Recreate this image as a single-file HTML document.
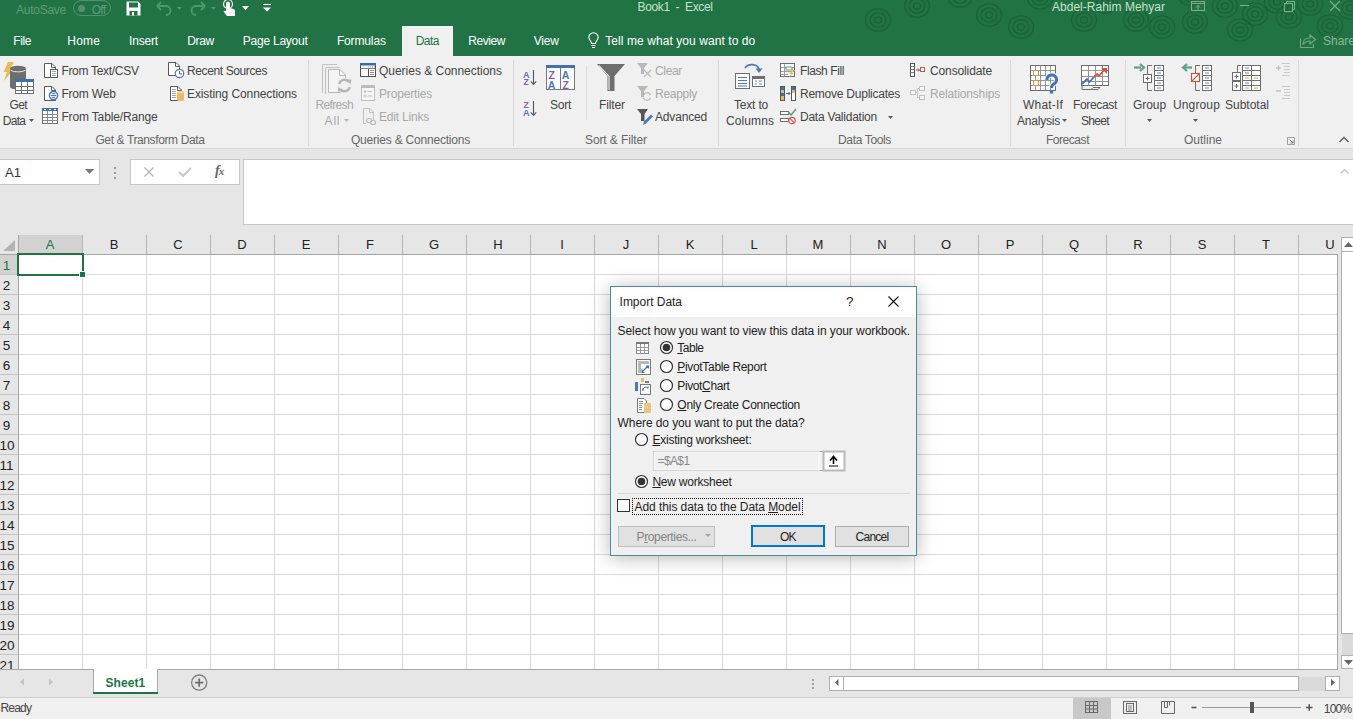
<!DOCTYPE html>
<html><head><meta charset="utf-8">
<style>
*{margin:0;padding:0;box-sizing:border-box}
html,body{width:1353px;height:719px;overflow:hidden;background:#fff;font-family:"Liberation Sans",sans-serif;position:relative}
.a{position:absolute}
.t{position:absolute;white-space:nowrap;line-height:1}
svg{position:absolute;overflow:visible}
.tab{position:absolute;color:#fff;font-size:12.5px;white-space:nowrap;line-height:1}
.rb{position:absolute;font-size:12px;color:#262626;white-space:nowrap;line-height:1}
.dis{color:#a8a8a8}
.glab{position:absolute;font-size:12px;color:#5a5a5a;white-space:nowrap;line-height:1}
.sep{position:absolute;width:1px;background:#d8d8d8}
.ch{position:absolute;top:235px;height:19px;font-size:13px;color:#222;text-align:center;line-height:19px}
.rh{position:absolute;left:-0.5px;width:14px;font-size:13.5px;color:#222;text-align:center;line-height:18px}
.dlg{position:absolute;font-size:12px;color:#000;white-space:nowrap;line-height:1}
u{text-decoration:underline;text-underline-offset:1px}
</style></head><body>
<div class="a" style="left:0;top:0;width:1353px;height:56px;background:#217346"></div>
<svg style="left:0;top:0" width="1353" height="56"><g fill="none" stroke="#1c6238" stroke-width="1.3"><ellipse cx="878" cy="20" rx="3.5" ry="3.1"/><ellipse cx="878" cy="20" rx="8" ry="7.2"/><ellipse cx="878" cy="20" rx="12.5" ry="11.2"/><ellipse cx="917" cy="6" rx="3.5" ry="3.1"/><ellipse cx="917" cy="6" rx="8" ry="7.2"/><ellipse cx="917" cy="6" rx="12.5" ry="11.2"/><ellipse cx="989" cy="15" rx="3.5" ry="3.1"/><ellipse cx="989" cy="15" rx="8" ry="7.2"/><ellipse cx="989" cy="15" rx="12.5" ry="11.2"/><ellipse cx="1021" cy="27" rx="3.5" ry="3.1"/><ellipse cx="1021" cy="27" rx="8" ry="7.2"/><ellipse cx="1021" cy="27" rx="12.5" ry="11.2"/><ellipse cx="1084" cy="20" rx="3.5" ry="3.1"/><ellipse cx="1084" cy="20" rx="8" ry="7.2"/><ellipse cx="1084" cy="20" rx="12.5" ry="11.2"/><ellipse cx="1136" cy="20" rx="3.5" ry="3.1"/><ellipse cx="1136" cy="20" rx="8" ry="7.2"/><ellipse cx="1136" cy="20" rx="12.5" ry="11.2"/><ellipse cx="1162" cy="27" rx="3.5" ry="3.1"/><ellipse cx="1162" cy="27" rx="8" ry="7.2"/><ellipse cx="1162" cy="27" rx="12.5" ry="11.2"/><ellipse cx="1225" cy="6" rx="3.5" ry="3.1"/><ellipse cx="1225" cy="6" rx="8" ry="7.2"/><ellipse cx="1225" cy="6" rx="12.5" ry="11.2"/><ellipse cx="1255" cy="14" rx="3.5" ry="3.1"/><ellipse cx="1255" cy="14" rx="8" ry="7.2"/><ellipse cx="1255" cy="14" rx="12.5" ry="11.2"/><ellipse cx="1289" cy="17" rx="3.5" ry="3.1"/><ellipse cx="1289" cy="17" rx="8" ry="7.2"/><ellipse cx="1289" cy="17" rx="12.5" ry="11.2"/><ellipse cx="1330" cy="26" rx="3.5" ry="3.1"/><ellipse cx="1330" cy="26" rx="8" ry="7.2"/><ellipse cx="1330" cy="26" rx="12.5" ry="11.2"/><ellipse cx="1277" cy="2" rx="3.5" ry="3.1"/><ellipse cx="1277" cy="2" rx="8" ry="7.2"/><ellipse cx="1277" cy="2" rx="12.5" ry="11.2"/><ellipse cx="1310" cy="4" rx="3.5" ry="3.1"/><ellipse cx="1310" cy="4" rx="8" ry="7.2"/><ellipse cx="1310" cy="4" rx="12.5" ry="11.2"/><ellipse cx="1350" cy="8" rx="3.5" ry="3.1"/><ellipse cx="1350" cy="8" rx="8" ry="7.2"/><ellipse cx="1350" cy="8" rx="12.5" ry="11.2"/><ellipse cx="1195" cy="22" rx="3.5" ry="3.1"/><ellipse cx="1195" cy="22" rx="8" ry="7.2"/><ellipse cx="1195" cy="22" rx="12.5" ry="11.2"/><ellipse cx="1105" cy="2" rx="3.5" ry="3.1"/><ellipse cx="1105" cy="2" rx="8" ry="7.2"/><ellipse cx="1105" cy="2" rx="12.5" ry="11.2"/><ellipse cx="960" cy="-4" rx="3.5" ry="3.1"/><ellipse cx="960" cy="-4" rx="8" ry="7.2"/><ellipse cx="960" cy="-4" rx="12.5" ry="11.2"/><ellipse cx="1040" cy="-2" rx="3.5" ry="3.1"/><ellipse cx="1040" cy="-2" rx="8" ry="7.2"/><ellipse cx="1040" cy="-2" rx="12.5" ry="11.2"/><ellipse cx="1190" cy="-6" rx="3.5" ry="3.1"/><ellipse cx="1190" cy="-6" rx="8" ry="7.2"/><ellipse cx="1190" cy="-6" rx="12.5" ry="11.2"/><ellipse cx="1240" cy="30" rx="3.5" ry="3.1"/><ellipse cx="1240" cy="30" rx="8" ry="7.2"/><ellipse cx="1240" cy="30" rx="12.5" ry="11.2"/></g></svg>
<div class="t" style="left:16.0px;top:4px;font-size:12px;letter-spacing:-0.255px;color:#5e9c78;">AutoSave</div>
<div class="a" style="left:73px;top:0px;width:38px;height:16px;border:1px solid #4f9170;border-radius:8px"></div>
<div class="a" style="left:78px;top:4.5px;width:7px;height:7px;border-radius:4px;background:#4f9170"></div>
<div class="t" style="left:91.8px;top:4px;font-size:12px;letter-spacing:-0.800px;color:#5e9c78;">Off</div>
<svg style="left:126px;top:1px" width="15" height="15" viewBox="0 0 15 15"><path d="M0.5 0.5H12L14.5 3V14.5H0.5Z" fill="#fff"/><rect x="3" y="1.5" width="9" height="5" fill="#217346"/><rect x="3.5" y="10" width="8" height="4.5" fill="#217346"/><rect x="6" y="11" width="2" height="3.5" fill="#fff"/></svg>
<svg style="left:156px;top:1px" width="26" height="14" viewBox="0 0 26 14"><path d="M3 5H10A4.5 4.5 0 0 1 10 14" stroke="#4d9a6d" stroke-width="1.8" fill="none"/><path d="M1 5L5 1M1 5L5 9" stroke="#4d9a6d" stroke-width="1.8" fill="none"/><path d="M21 6H26L23.5 9Z" fill="#4d9a6d"/></svg>
<svg style="left:190px;top:1px" width="26" height="14" viewBox="0 0 26 14"><path d="M13 5H6A4.5 4.5 0 0 0 6 14" stroke="#4d9a6d" stroke-width="1.8" fill="none"/><path d="M15 5L11 1M15 5L11 9" stroke="#4d9a6d" stroke-width="1.8" fill="none"/><path d="M21 6H26L23.5 9Z" fill="#4d9a6d"/></svg>
<svg style="left:222px;top:0px" width="14" height="17" viewBox="0 0 14 17"><path d="M4 9V3.5A2 2 0 0 1 8 3.5V8L11.5 9A2 2 0 0 1 13 11V16H5L1.5 11.5L3 10.5L4 11.5" fill="#fff"/><circle cx="6" cy="4" r="4.5" fill="none" stroke="#fff" stroke-width="1.2"/></svg>
<svg style="left:242px;top:6px" width="7" height="4"><path d="M0 0H7L3.5 4Z" fill="#fff"/></svg>
<svg style="left:263px;top:4px" width="8" height="8"><path d="M0 0.5H8" stroke="#fff" stroke-width="1.2"/><path d="M0 3.5H8L4 7.5Z" fill="#fff"/></svg>
<div class="t" style="left:637.6px;top:1px;font-size:12px;letter-spacing:-0.387px;color:#c3e3cc;">Book1&nbsp;&nbsp;-&nbsp;&nbsp;Excel</div>
<div class="t" style="left:1052.0px;top:1px;font-size:12px;letter-spacing:0.016px;color:#c3e3cc;">Abdel-Rahim Mehyar</div>
<svg style="left:1191px;top:1px" width="14" height="11" viewBox="0 0 14 11"><rect x="0.5" y="0.5" width="13" height="9" fill="none" stroke="#7fae90"/><path d="M0.5 2.5H13.5" stroke="#7fae90"/><path d="M7 9V4.5M5 6.5L7 4.5L9 6.5" stroke="#7fae90" fill="none"/></svg>
<div class="a" style="left:1240px;top:5px;width:9px;height:1px;background:#7fae90"></div>
<svg style="left:1284px;top:1px" width="11" height="11" viewBox="0 0 11 11"><rect x="0.5" y="2.5" width="8" height="8" fill="none" stroke="#7fae90"/><path d="M2.5 2.5V0.5H10.5V8.5H8.5" fill="none" stroke="#7fae90"/></svg>
<svg style="left:1330px;top:1px" width="10" height="10" viewBox="0 0 10 10"><path d="M0 0L10 10M10 0L0 10" stroke="#7fae90" stroke-width="1.1"/></svg>
<div class="t" style="left:13.3px;top:35px;font-size:12px;letter-spacing:-0.409px;color:#ffffff;">File</div>
<div class="t" style="left:67.3px;top:35px;font-size:12px;letter-spacing:0.223px;color:#ffffff;">Home</div>
<div class="t" style="left:129.0px;top:35px;font-size:12px;letter-spacing:-0.185px;color:#ffffff;">Insert</div>
<div class="t" style="left:187.2px;top:35px;font-size:12px;letter-spacing:-0.351px;color:#ffffff;">Draw</div>
<div class="t" style="left:242.8px;top:35px;font-size:12px;letter-spacing:-0.235px;color:#ffffff;">Page Layout</div>
<div class="t" style="left:336.9px;top:35px;font-size:12px;letter-spacing:-0.139px;color:#ffffff;">Formulas</div>
<div class="a" style="left:402px;top:26px;width:51px;height:31px;background:#f0f0f0"></div>
<div class="t" style="left:415.7px;top:35px;font-size:12px;letter-spacing:-0.562px;color:#217346;">Data</div>
<div class="t" style="left:468.3px;top:35px;font-size:12px;letter-spacing:-0.458px;color:#ffffff;">Review</div>
<div class="t" style="left:533.8px;top:35px;font-size:12px;letter-spacing:-0.223px;color:#ffffff;">View</div>
<svg style="left:588px;top:33px" width="11" height="15" viewBox="0 0 11 15"><path d="M3.5 10.5C3.5 8 0.8 7 0.8 4.5A4.7 4.7 0 0 1 10.2 4.5C10.2 7 7.5 8 7.5 10.5Z" fill="none" stroke="#fff" stroke-width="1.1"/><path d="M3.5 12.5H7.5M4 14.5H7" stroke="#fff" stroke-width="1.1"/></svg>
<div class="t" style="left:605.3px;top:35px;font-size:12px;letter-spacing:0.071px;color:#ffffff;">Tell me what you want to do</div>
<svg style="left:1300px;top:34px" width="16" height="14" viewBox="0 0 16 14"><path d="M0.5 4.5V13.5H13.5V10" fill="none" stroke="#6fa888" stroke-width="1.1"/><path d="M3 10C3 6 6 4 10 4V1L15.5 5.5L10 10V7C7 7 5 8 3 10Z" fill="none" stroke="#6fa888" stroke-width="1.1"/></svg>
<div class="t" style="left:1323.0px;top:35px;font-size:12px;color:#8ab89a;">Share</div>
<div class="a" style="left:0;top:56px;width:1353px;height:92px;background:#f0f0f0"></div>
<div class="a" style="left:0;top:148px;width:1353px;height:1px;background:#d6d6d6"></div>
<div class="t" style="left:9.6px;top:99px;font-size:12px;letter-spacing:-0.714px;color:#444444;">Get</div>
<div class="t" style="left:2.8px;top:115px;font-size:12px;letter-spacing:-0.712px;color:#444444;">Data</div>
<div class="t" style="left:61.4px;top:65px;font-size:12px;letter-spacing:-0.302px;color:#444444;">From Text/CSV</div>
<div class="t" style="left:61.4px;top:88px;font-size:12px;letter-spacing:-0.186px;color:#444444;">From Web</div>
<div class="t" style="left:61.4px;top:111px;font-size:12px;letter-spacing:-0.150px;color:#444444;">From Table/Range</div>
<div class="t" style="left:187.0px;top:65px;font-size:12px;letter-spacing:-0.384px;color:#444444;">Recent Sources</div>
<div class="t" style="left:187.0px;top:88px;font-size:12px;letter-spacing:-0.103px;color:#444444;">Existing Connections</div>
<div class="t" style="left:95.4px;top:134px;font-size:12px;letter-spacing:-0.380px;color:#666666;">Get & Transform Data</div>
<div class="t" style="left:315.5px;top:99px;font-size:12px;letter-spacing:-0.645px;color:#a8a8a8;">Refresh</div>
<div class="t" style="left:324.6px;top:115px;font-size:12px;letter-spacing:0.800px;color:#a8a8a8;">All</div>
<div class="t" style="left:379.0px;top:65px;font-size:12px;letter-spacing:-0.019px;color:#444444;">Queries & Connections</div>
<div class="t" style="left:379.0px;top:88px;font-size:12px;letter-spacing:-0.169px;color:#a8a8a8;">Properties</div>
<div class="t" style="left:379.0px;top:111px;font-size:12px;letter-spacing:-0.203px;color:#a8a8a8;">Edit Links</div>
<div class="t" style="left:351.0px;top:134px;font-size:12px;letter-spacing:-0.209px;color:#666666;">Queries & Connections</div>
<div class="t" style="left:550.0px;top:99px;font-size:12px;letter-spacing:-0.252px;color:#444444;">Sort</div>
<div class="t" style="left:599.0px;top:99px;font-size:12px;letter-spacing:-0.111px;color:#444444;">Filter</div>
<div class="t" style="left:655.0px;top:65px;font-size:12px;letter-spacing:-0.335px;color:#a8a8a8;">Clear</div>
<div class="t" style="left:655.0px;top:88px;font-size:12px;letter-spacing:-0.290px;color:#a8a8a8;">Reapply</div>
<div class="t" style="left:655.0px;top:111px;font-size:12px;letter-spacing:-0.172px;color:#444444;">Advanced</div>
<div class="t" style="left:585.0px;top:134px;font-size:12px;letter-spacing:-0.104px;color:#666666;">Sort & Filter</div>
<div class="t" style="left:734.0px;top:99px;font-size:12px;letter-spacing:-0.193px;color:#444444;">Text to</div>
<div class="t" style="left:726.0px;top:115px;font-size:12px;letter-spacing:0.093px;color:#444444;">Columns</div>
<div class="t" style="left:800.0px;top:65px;font-size:12px;letter-spacing:-0.401px;color:#444444;">Flash Fill</div>
<div class="t" style="left:800.0px;top:88px;font-size:12px;letter-spacing:-0.238px;color:#444444;">Remove Duplicates</div>
<div class="t" style="left:800.0px;top:111px;font-size:12px;letter-spacing:-0.233px;color:#444444;">Data Validation</div>
<div class="t" style="left:930.0px;top:65px;font-size:12px;letter-spacing:-0.125px;color:#444444;">Consolidate</div>
<div class="t" style="left:930.0px;top:88px;font-size:12px;letter-spacing:-0.157px;color:#a8a8a8;">Relationships</div>
<div class="t" style="left:838.0px;top:134px;font-size:12px;letter-spacing:-0.348px;color:#666666;">Data Tools</div>
<div class="t" style="left:1023.0px;top:99px;font-size:12px;letter-spacing:0.190px;color:#444444;">What-If</div>
<div class="t" style="left:1017.0px;top:115px;font-size:12px;letter-spacing:-0.210px;color:#444444;">Analysis</div>
<div class="t" style="left:1073.0px;top:99px;font-size:12px;letter-spacing:-0.335px;color:#444444;">Forecast</div>
<div class="t" style="left:1081.0px;top:115px;font-size:12px;letter-spacing:-0.672px;color:#444444;">Sheet</div>
<div class="t" style="left:1046.0px;top:134px;font-size:12px;letter-spacing:-0.460px;color:#666666;">Forecast</div>
<div class="t" style="left:1133.0px;top:99px;font-size:12px;letter-spacing:-0.070px;color:#444444;">Group</div>
<div class="t" style="left:1173.0px;top:99px;font-size:12px;letter-spacing:0.138px;color:#444444;">Ungroup</div>
<div class="t" style="left:1225.0px;top:99px;font-size:12px;letter-spacing:-0.004px;color:#444444;">Subtotal</div>
<div class="t" style="left:1184.0px;top:134px;font-size:12px;letter-spacing:-0.003px;color:#666666;">Outline</div>
<div class="sep" style="left:308px;top:60px;height:86px"></div>
<div class="sep" style="left:513px;top:60px;height:86px"></div>
<div class="sep" style="left:718px;top:60px;height:86px"></div>
<div class="sep" style="left:1010px;top:60px;height:86px"></div>
<div class="sep" style="left:1125px;top:60px;height:86px"></div>
<div class="sep" style="left:1298px;top:60px;height:86px"></div>
<div class="sep" style="left:586px;top:66px;height:54px;background:#dcdcdc"></div>
<svg style="left:29px;top:119px" width="5" height="3"><path d="M0 0H5L2.5 3Z" fill="#5a5a5a"/></svg>
<svg style="left:344px;top:119px" width="5" height="3"><path d="M0 0H5L2.5 3Z" fill="#b5b5b5"/></svg>
<svg style="left:888px;top:116px" width="5" height="3"><path d="M0 0H5L2.5 3Z" fill="#5a5a5a"/></svg>
<svg style="left:1062px;top:119px" width="5" height="3"><path d="M0 0H5L2.5 3Z" fill="#5a5a5a"/></svg>
<svg style="left:1147px;top:119px" width="5" height="3"><path d="M0 0H5L2.5 3Z" fill="#5a5a5a"/></svg>
<svg style="left:1193px;top:119px" width="5" height="3"><path d="M0 0H5L2.5 3Z" fill="#5a5a5a"/></svg>
<svg style="left:0;top:0" width="1353" height="150">
<!-- Get Data -->
<path d="M8 62H14L9.5 70H13L4 81L7 72H3.5Z" fill="#e9b95a"/>
<path d="M10 68.5V87A8 2.5 0 0 0 26 87V68.5Z" fill="#6e6e6e"/>
<ellipse cx="18" cy="68.5" rx="8" ry="2.8" fill="#6e6e6e"/>
<path d="M10.5 70.2A8 2.6 0 0 0 25.5 70.2" stroke="#f0f0f0" stroke-width="0.9" fill="none"/>
<rect x="15.5" y="79.5" width="18" height="14" fill="#fff" stroke="#6e6e6e"/>
<rect x="15" y="79" width="19" height="3" fill="#3f6fb0"/>
<path d="M21.5 82V94M27.5 82V94M16 86.5H34M16 90.5H34" stroke="#6e6e6e"/>
<!-- From Text/CSV -->
<path d="M44.5 63.5H52L55.5 67V77.5H44.5Z" fill="#fff" stroke="#5a5a5a"/>
<path d="M51.5 63.5V67.5H55.5" fill="none" stroke="#5a5a5a"/>
<rect x="50.5" y="69.5" width="7" height="8" fill="#fff" stroke="#5a5a5a"/>
<path d="M52 71.5H56M52 73.5H56M52 75.5H56" stroke="#7a7a7a" stroke-width="0.7"/>
<!-- From Web -->
<path d="M44.5 86.5H52L55.5 90V100.5H44.5Z" fill="#fff" stroke="#5a5a5a"/>
<path d="M51.5 86.5V90.5H55.5" fill="none" stroke="#5a5a5a"/>
<circle cx="53.5" cy="95.5" r="4.8" fill="#4a7ab7"/>
<circle cx="53.5" cy="95.5" r="3" fill="none" stroke="#fff" stroke-width="0.9"/>
<path d="M50.5 94.5H56.5M50.5 96.5H56.5" stroke="#fff" stroke-width="0.8"/>
<!-- From Table/Range -->
<rect x="42.5" y="108.5" width="15" height="15" fill="#fff" stroke="#6e6e6e"/>
<rect x="42" y="108" width="16" height="3" fill="#3f6fb0"/>
<path d="M44 109.5H46M49 109.5H51M54 109.5H56" stroke="#fff"/>
<path d="M47.5 111V124M52.5 111V124M43 114.5H58M43 117.5H58M43 120.5H58" stroke="#8a8a8a"/>
<!-- Recent Sources -->
<path d="M168.5 62.5H176L179.5 66V75.5H168.5Z" fill="#fff" stroke="#5a5a5a"/>
<path d="M175.5 62.5V66.5H179.5" fill="none" stroke="#5a5a5a"/>
<circle cx="179.5" cy="73.5" r="4.2" fill="#fff" stroke="#4a7ab7" stroke-width="1.2"/>
<path d="M179.5 71V73.8H182" stroke="#5a5a5a" fill="none"/>
<!-- Existing Connections -->
<path d="M170.5 86.5H178L181.5 90V100.5H170.5Z" fill="#fff" stroke="#5a5a5a"/>
<path d="M177.5 86.5V90.5H181.5" fill="none" stroke="#5a5a5a"/>
<path d="M172 89.5H176M172 91.5H176M172 93.5H176M172 95.5H176M172 97.5H176" stroke="#7a7a7a" stroke-width="0.7"/>
<path d="M177 92V99.5A3.5 1.5 0 0 0 184 99.5V92Z" fill="#e7bd6a"/>
<ellipse cx="180.5" cy="92" rx="3.5" ry="1.3" fill="#f1d49a"/>
<!-- Refresh All (disabled) -->
<path d="M322.5 93V64.5H337" fill="none" stroke="#c2c2c2"/>
<path d="M325.5 94V67.5H340" fill="none" stroke="#c2c2c2"/>
<path d="M328.5 92.5V69.5H340L345.5 75V92.5Z" fill="#f4f4f4" stroke="#b8b8b8"/>
<path d="M339.5 69.5V75.5H345.5" fill="none" stroke="#b8b8b8"/>
<circle cx="344.5" cy="85.5" r="8" fill="#f0f0f0"/>
<path d="M339.2 84A5.5 5.5 0 0 1 349 82" stroke="#b5b5b5" stroke-width="2.4" fill="none"/>
<path d="M349.8 87A5.5 5.5 0 0 1 340 89" stroke="#b5b5b5" stroke-width="2.4" fill="none"/>
<path d="M346.5 79.5L351.5 79.5L350.5 84.5Z" fill="#b5b5b5"/>
<path d="M342.5 91.5L337.5 91.5L338.5 86.5Z" fill="#b5b5b5"/>
<!-- Queries & Connections -->
<rect x="360.5" y="63.5" width="15" height="13" fill="#fff" stroke="#505050"/>
<rect x="360" y="63" width="16" height="2.5" fill="#3c6aa5"/>
<path d="M368.5 69V77" stroke="#505050"/>
<path d="M361 68.5H376" stroke="#505050" stroke-width="0.7"/>
<path d="M370 70.5H374M370 72.5H374M370 74.5H374" stroke="#707070" stroke-width="0.8"/>
<path d="M368 67H369M370 67H371M372 67H373M374 67H375" stroke="#707070" stroke-width="0.8"/>
<!-- Properties -->
<rect x="361.5" y="85.5" width="13" height="15" fill="#f6f6f6" stroke="#bdbdbd"/>
<path d="M362 87H374" stroke="#bdbdbd" stroke-width="2"/>
<circle cx="365" cy="91.5" r="1.2" fill="#bdbdbd"/><circle cx="365" cy="96" r="1.2" fill="none" stroke="#bdbdbd" stroke-width="0.8"/>
<path d="M367.5 91.5H372M367.5 96H372" stroke="#bdbdbd"/>
<!-- Edit Links -->
<path d="M363.5 108.5H370L373.5 112V120M366 123.5H363.5V108.5" fill="none" stroke="#c0c0c0"/>
<path d="M369.5 108.5V112.5H373.5" fill="none" stroke="#c0c0c0"/>
<rect x="366.5" y="118.5" width="5" height="4" rx="2" fill="none" stroke="#b8b8b8" stroke-width="1.1"/>
<rect x="370.5" y="120.5" width="5" height="4" rx="2" fill="none" stroke="#b8b8b8" stroke-width="1.1"/>
</svg>
<svg style="left:0;top:0" width="1353" height="150" font-family="Liberation Sans" font-weight="bold">
<!-- AZ sort -->
<text x="523" y="77.5" font-size="9" fill="#4a7ab7">A</text>
<text x="523.5" y="85" font-size="8.5" fill="#8e5ab5">Z</text>
<path d="M533.5 70V84M530.8 81.3L533.5 84.5L536.2 81.3" stroke="#555" stroke-width="1.1" fill="none"/>
<text x="523.5" y="108" font-size="8.5" fill="#8e5ab5">Z</text>
<text x="523" y="116" font-size="9" fill="#4a7ab7">A</text>
<path d="M533.5 101V115M530.8 112.3L533.5 115.5L536.2 112.3" stroke="#555" stroke-width="1.1" fill="none"/>
<!-- Sort -->
<rect x="546.5" y="65.5" width="28" height="24" fill="#fff" stroke="#7a7a7a"/>
<rect x="546" y="65" width="29" height="3" fill="#4472b0"/>
<path d="M560.5 68V90" stroke="#7a7a7a"/>
<text x="548.5" y="78.5" font-size="10.5" fill="#8e5ab5">Z</text>
<text x="547.8" y="88.5" font-size="10.5" fill="#4a7ab7">A</text>
<text x="561.8" y="78.5" font-size="10.5" fill="#4a7ab7">A</text>
<text x="562.5" y="88.5" font-size="10.5" fill="#8e5ab5">Z</text>
<!-- Filter -->
<path d="M597 64H625L614.5 76V91H607.5V76Z" fill="#6e6e6e"/>
<path d="M599 65.5L609 76.5V90" stroke="#f4f4f4" stroke-width="1.1" fill="none"/>
<!-- Clear -->
<path d="M637 63H648L644 68V74H641V68Z" fill="#b8b8b8"/>
<path d="M644 70L651 77M651 70L644 77" stroke="#b8b8b8" stroke-width="1.2"/>
<!-- Reapply -->
<path d="M637 86H648L644 91V97H641V91Z" fill="#b8b8b8"/>
<path d="M643.5 95A3.8 3.8 0 0 1 650.5 95" stroke="#b8b8b8" stroke-width="1.3" fill="none"/>
<path d="M650.5 98A3.8 3.8 0 0 1 643.5 98" stroke="#b8b8b8" stroke-width="1.3" fill="none"/>
<!-- Advanced -->
<path d="M637 109H648L644.5 114V121H641V114Z" fill="#555"/>
<path d="M643 125L644 121.5L651 114.5L653 116.5L646 123.5Z" fill="#4a7ab7"/>
<!-- Text to Columns -->
<rect x="735.5" y="73.5" width="14" height="15" fill="#fff" stroke="#6e6e6e"/>
<path d="M738 77.5H747M738 80.5H747M738 83.5H747M738 86H747" stroke="#4a7ab7" stroke-width="1"/>
<rect x="752.5" y="76.5" width="12" height="10" fill="#fff" stroke="#6e6e6e"/>
<path d="M752.5 78H764.5" stroke="#6e6e6e" stroke-width="2"/>
<path d="M755 81H757M759 81H762M755 84H757M759 84H762" stroke="#4a7ab7" stroke-width="0.9"/>
<path d="M745 68A7.5 6 0 0 1 759 69" stroke="#4a7ab7" stroke-width="1.8" fill="none"/>
<path d="M755.5 68.5L759 73L762.5 68.5Z" fill="#4a7ab7"/>
<!-- Flash Fill -->
<rect x="780.5" y="63.5" width="14" height="13" fill="#fff" stroke="#6e6e6e"/>
<path d="M781 67.5H794M781 71.5H794M781 74.5H788M784.5 64V77" stroke="#8a8a8a" stroke-width="0.8"/>
<rect x="786" y="67" width="6" height="3" fill="#fff" stroke="#5c9e8c"/>
<path d="M792 70L789 74H791L788 78L794 73H792L795 70Z" fill="#e9c15c"/>
<!-- Remove Duplicates -->
<rect x="780.5" y="86.5" width="4" height="14" fill="#fff" stroke="#555"/>
<rect x="781" y="87" width="3" height="3" fill="#3f6fb0"/><rect x="781" y="90" width="3" height="3" fill="#e3b964"/><rect x="781" y="93" width="3" height="3" fill="#3f6fb0"/><rect x="781" y="96" width="3" height="4" fill="#e3b964"/>
<rect x="791.5" y="86.5" width="4" height="14" fill="#fff" stroke="#555"/>
<rect x="792" y="87" width="3" height="3" fill="#3f6fb0"/><rect x="792" y="90" width="3" height="3" fill="#e3b964"/>
<path d="M786 93.5H790M788.5 92L790 93.5L788.5 95" stroke="#3f6fb0" stroke-width="1" fill="none"/>
<!-- Data Validation -->
<rect x="780.5" y="111.5" width="8" height="3" fill="#fff" stroke="#6e6e6e"/>
<rect x="780.5" y="118.5" width="8" height="3" fill="#fff" stroke="#6e6e6e"/>
<path d="M788.5 112L791 115L796 109" stroke="#5c9e8c" stroke-width="1.5" fill="none"/>
<circle cx="792" cy="120.5" r="3.2" fill="#fff" stroke="#e0554a" stroke-width="1.2"/>
<path d="M790 118.5L794 122.5" stroke="#e0554a" stroke-width="1.1"/>
<!-- Consolidate -->
<rect x="910.5" y="63.5" width="4" height="13" fill="#fff" stroke="#555"/>
<path d="M911 66.5H914M911 69.5H914M911 72.5H914" stroke="#555" stroke-width="0.8"/>
<path d="M916 70H919.5M918 68.5L919.5 70L918 71.5" stroke="#555" stroke-width="0.9" fill="none"/>
<rect x="920.5" y="67.5" width="4" height="4" fill="#fff" stroke="#d0553f"/>
<!-- Relationships -->
<rect x="910.5" y="90.5" width="5" height="4" fill="#f6f6f6" stroke="#c0c0c0"/>
<rect x="919.5" y="86.5" width="5" height="4" fill="#f6f6f6" stroke="#c0c0c0"/>
<rect x="919.5" y="95.5" width="5" height="4" fill="#f6f6f6" stroke="#c0c0c0"/>
<path d="M915.5 92.5H917.5V88.5H919.5M917.5 92.5V97.5H919.5" stroke="#c0c0c0" fill="none"/>
<!-- What-If -->
<rect x="1030.5" y="65.5" width="25" height="25" fill="#fff" stroke="#6e6e6e"/>
<path d="M1035.5 66V90M1040.5 66V90M1045.5 66V90M1050.5 66V90M1031 70.5H1055M1031 75.5H1055M1031 80.5H1055M1031 85.5H1055" stroke="#8a8a8a" stroke-width="0.9"/>
<rect x="1033.5" y="70.5" width="5" height="5" fill="#fff" stroke="#e0913a"/>
<rect x="1033.5" y="80.5" width="5" height="5" fill="#fff" stroke="#e0913a"/>
<path d="M1047 80A4.8 4.8 0 1 1 1053.5 84.2C1052 85 1051.5 85.8 1051.5 88" stroke="#f0f0f0" stroke-width="5" fill="none"/><path d="M1047 80A4.8 4.8 0 1 1 1053.5 84.2C1052 85 1051.5 85.8 1051.5 88" stroke="#3f74b8" stroke-width="3" fill="none"/><rect x="1049.8" y="90" width="3.4" height="3.5" fill="#3f74b8"/>
<!-- Forecast Sheet -->
<rect x="1081.5" y="65.5" width="27" height="20" fill="#fff" stroke="#6e6e6e"/>
<path d="M1088.5 66V86M1095.5 66V86M1102.5 66V86M1082 70.5H1108M1082 76.5H1108M1082 81.5H1108" stroke="#8a8a8a" stroke-width="0.9"/>
<path d="M1082 85.5V89.5H1091L1093 87.5H1100L1098 89.5H1090" fill="none" stroke="#6e6e6e"/>
<path d="M1082 84L1087 79L1089.5 82L1094 77" stroke="#3f74b8" stroke-width="1.8" fill="none"/>
<path d="M1094 77L1097 74L1099 76L1105 69" stroke="#d9503e" stroke-width="1.8" fill="none"/>
<path d="M1101 68H1107V74Z" fill="#d9503e"/>
<!-- Group -->
<path d="M1134 67.5H1141" stroke="#5f9f8a" stroke-width="2.2"/>
<path d="M1140 64L1144 67.5L1140 71" stroke="#5f9f8a" stroke-width="2.2" fill="none"/>
<path d="M1152 65.5H1147.5V90.5H1152" stroke="#6e6e6e" fill="none"/>
<rect x="1143.5" y="74.5" width="8" height="8" fill="#fff" stroke="#6e6e6e"/>
<path d="M1145.5 78.5H1149.5M1147.5 76.5V80.5" stroke="#6e6e6e"/>
<rect x="1154.5" y="65.5" width="9" height="25" fill="#fff" stroke="#6e6e6e"/>
<path d="M1155 70.5H1163M1155 75.5H1163M1155 80.5H1163M1155 85.5H1163" stroke="#6e6e6e"/>
<path d="M1157 68H1161M1157 73H1161M1157 78H1161M1157 83H1161M1157 88H1161" stroke="#4a7ab7" stroke-width="0.9"/>
<!-- Ungroup -->
<path d="M1184 67.5H1192" stroke="#5f9f8a" stroke-width="2.2"/>
<path d="M1187 64L1183 67.5L1187 71" stroke="#5f9f8a" stroke-width="2.2" fill="none"/>
<path d="M1200 65.5H1195.5V90.5H1200" stroke="#6e6e6e" fill="none"/>
<rect x="1191.5" y="73.5" width="8" height="8" fill="#fff" stroke="#d0553f" stroke-width="1.2"/>
<path d="M1192 81L1199 74" stroke="#d0553f" stroke-width="1.1"/>
<rect x="1202.5" y="65.5" width="9" height="25" fill="#fff" stroke="#6e6e6e"/>
<path d="M1203 70.5H1211M1203 75.5H1211M1203 80.5H1211M1203 85.5H1211" stroke="#6e6e6e"/>
<path d="M1205 68H1209M1205 73H1209M1205 78H1209M1205 83H1209M1205 88H1209" stroke="#4a7ab7" stroke-width="0.9"/>
<!-- Subtotal -->
<path d="M1241 65.5H1237.5V72" stroke="#6e6e6e" fill="none"/>
<rect x="1232.5" y="72.5" width="8" height="8" fill="#fff" stroke="#6e6e6e"/>
<rect x="1232.5" y="81.5" width="8" height="9" fill="#fff" stroke="#6e6e6e"/>
<path d="M1234.5 76.5H1238.5M1236.5 74.5V78.5M1234.5 86H1238.5M1236.5 84V88" stroke="#6e6e6e"/>
<rect x="1242.5" y="65.5" width="18" height="25" fill="#fff" stroke="#6e6e6e"/>
<path d="M1251.5 66V90M1243 70.5H1260M1243 75.5H1260M1243 80.5H1260M1243 85.5H1260" stroke="#6e6e6e"/>
<path d="M1245 68H1249M1245 73H1249M1245 83H1249" stroke="#4a7ab7" stroke-width="0.9"/>
<path d="M1245 78H1249M1254 78H1258M1245 88H1249M1254 88H1258" stroke="#e0913a" stroke-width="0.9"/>
<!-- Show/Hide detail -->
<path d="M1276 68H1281M1278.5 65.5V70.5" stroke="#c4c4c4" stroke-width="1.6"/>
<path d="M1282 63.5H1290M1284 66.5H1290M1284 69.5H1290M1284 72.5H1290M1282 75.5H1290" stroke="#c8c8c8"/>
<path d="M1276 91H1281" stroke="#c4c4c4" stroke-width="1.6"/>
<path d="M1282 86.5H1290M1284 89.5H1290M1284 92.5H1290M1284 95.5H1290M1282 98.5H1290" stroke="#c8c8c8"/>
<!-- launcher -->
<path d="M1287.5 137.5H1294.5V144.5H1287.5Z" fill="none" stroke="#8a8a8a" stroke-width="0.8"/>
<path d="M1289.5 139.5L1293 143M1290.5 143H1293V140.5" stroke="#6e6e6e" stroke-width="0.9" fill="none"/>
<!-- collapse -->
<path d="M1339.5 142L1344 137.5L1348.5 142" stroke="#555" stroke-width="1.3" fill="none"/>
</svg>
<div class="a" style="left:0;top:149px;width:1353px;height:86px;background:#e6e6e6"></div>
<div class="a" style="left:-1px;top:159px;width:101px;height:26px;background:#fff;border:1px solid #c6c6c6"></div>
<div class="t" style="left:5px;top:166px;font-size:13px;color:#333">A1</div>
<svg style="left:85px;top:169px" width="9" height="5"><path d="M0 0H9L4.5 5Z" fill="#777"/></svg>
<div class="a" style="left:114px;top:167px;width:2px;height:2px;background:#9a9a9a"></div>
<div class="a" style="left:114px;top:172px;width:2px;height:2px;background:#9a9a9a"></div>
<div class="a" style="left:114px;top:177px;width:2px;height:2px;background:#9a9a9a"></div>
<div class="a" style="left:130px;top:159px;width:110px;height:26px;background:#fff;border:1px solid #c6c6c6"></div>
<svg style="left:144px;top:167px" width="10" height="10"><path d="M0.5 0.5L9.5 9.5M9.5 0.5L0.5 9.5" stroke="#b3b3b3" stroke-width="1.3"/></svg>
<svg style="left:178px;top:167px" width="14" height="10"><path d="M1 5L5 9L13 1" stroke="#c8c8c8" stroke-width="2" fill="none"/></svg>
<div class="t" style="left:215px;top:164px;font-size:14px;color:#666;font-family:Liberation Serif;font-style:italic;font-weight:bold;letter-spacing:-1px">f<span style="font-size:11px">x</span></div>
<div class="a" style="left:243px;top:159px;width:1111px;height:66px;background:#fff;border:1px solid #c6c6c6"></div>
<svg style="left:1340px;top:168px" width="9" height="6"><path d="M0.5 5.5L4.5 1.5L8.5 5.5" stroke="#bdbdbd" stroke-width="1.2" fill="none"/></svg>
<div class="a" style="left:18px;top:254px;width:1320px;height:415px;background:#fff"></div>
<div class="a" style="left:0;top:235px;width:1338px;height:19px;background:#e6e6e6"></div>
<div class="a" style="left:18px;top:235px;width:65px;height:19px;background:#d2d2d2"></div>
<div class="a" style="left:0;top:254px;width:18px;height:415px;background:#e6e6e6"></div>
<div class="a" style="left:0;top:255px;width:18px;height:19px;background:#d2d2d2"></div>
<svg style="left:3px;top:240px" width="13" height="12"><path d="M12 0V11H0Z" fill="#b4b4b4"/></svg>
<div class="a" style="left:18px;top:235px;width:1px;height:434px;background:#a6a6a6"></div>
<div class="a" style="left:82px;top:235px;width:1px;height:19px;background:#b4b4b4"></div>
<div class="a" style="left:82px;top:254px;width:1px;height:415px;background:#dadada"></div>
<div class="a" style="left:146px;top:235px;width:1px;height:19px;background:#b4b4b4"></div>
<div class="a" style="left:146px;top:254px;width:1px;height:415px;background:#dadada"></div>
<div class="a" style="left:210px;top:235px;width:1px;height:19px;background:#b4b4b4"></div>
<div class="a" style="left:210px;top:254px;width:1px;height:415px;background:#dadada"></div>
<div class="a" style="left:274px;top:235px;width:1px;height:19px;background:#b4b4b4"></div>
<div class="a" style="left:274px;top:254px;width:1px;height:415px;background:#dadada"></div>
<div class="a" style="left:338px;top:235px;width:1px;height:19px;background:#b4b4b4"></div>
<div class="a" style="left:338px;top:254px;width:1px;height:415px;background:#dadada"></div>
<div class="a" style="left:402px;top:235px;width:1px;height:19px;background:#b4b4b4"></div>
<div class="a" style="left:402px;top:254px;width:1px;height:415px;background:#dadada"></div>
<div class="a" style="left:466px;top:235px;width:1px;height:19px;background:#b4b4b4"></div>
<div class="a" style="left:466px;top:254px;width:1px;height:415px;background:#dadada"></div>
<div class="a" style="left:530px;top:235px;width:1px;height:19px;background:#b4b4b4"></div>
<div class="a" style="left:530px;top:254px;width:1px;height:415px;background:#dadada"></div>
<div class="a" style="left:594px;top:235px;width:1px;height:19px;background:#b4b4b4"></div>
<div class="a" style="left:594px;top:254px;width:1px;height:415px;background:#dadada"></div>
<div class="a" style="left:658px;top:235px;width:1px;height:19px;background:#b4b4b4"></div>
<div class="a" style="left:658px;top:254px;width:1px;height:415px;background:#dadada"></div>
<div class="a" style="left:722px;top:235px;width:1px;height:19px;background:#b4b4b4"></div>
<div class="a" style="left:722px;top:254px;width:1px;height:415px;background:#dadada"></div>
<div class="a" style="left:786px;top:235px;width:1px;height:19px;background:#b4b4b4"></div>
<div class="a" style="left:786px;top:254px;width:1px;height:415px;background:#dadada"></div>
<div class="a" style="left:850px;top:235px;width:1px;height:19px;background:#b4b4b4"></div>
<div class="a" style="left:850px;top:254px;width:1px;height:415px;background:#dadada"></div>
<div class="a" style="left:914px;top:235px;width:1px;height:19px;background:#b4b4b4"></div>
<div class="a" style="left:914px;top:254px;width:1px;height:415px;background:#dadada"></div>
<div class="a" style="left:978px;top:235px;width:1px;height:19px;background:#b4b4b4"></div>
<div class="a" style="left:978px;top:254px;width:1px;height:415px;background:#dadada"></div>
<div class="a" style="left:1042px;top:235px;width:1px;height:19px;background:#b4b4b4"></div>
<div class="a" style="left:1042px;top:254px;width:1px;height:415px;background:#dadada"></div>
<div class="a" style="left:1106px;top:235px;width:1px;height:19px;background:#b4b4b4"></div>
<div class="a" style="left:1106px;top:254px;width:1px;height:415px;background:#dadada"></div>
<div class="a" style="left:1170px;top:235px;width:1px;height:19px;background:#b4b4b4"></div>
<div class="a" style="left:1170px;top:254px;width:1px;height:415px;background:#dadada"></div>
<div class="a" style="left:1234px;top:235px;width:1px;height:19px;background:#b4b4b4"></div>
<div class="a" style="left:1234px;top:254px;width:1px;height:415px;background:#dadada"></div>
<div class="a" style="left:1298px;top:235px;width:1px;height:19px;background:#b4b4b4"></div>
<div class="a" style="left:1298px;top:254px;width:1px;height:415px;background:#dadada"></div>
<div class="a" style="left:0;top:254px;width:1338px;height:1px;background:#a6a6a6"></div>
<div class="a" style="left:0;top:274px;width:18px;height:1px;background:#c4c4c4"></div>
<div class="a" style="left:19px;top:274px;width:1319px;height:1px;background:#dadada"></div>
<div class="a" style="left:0;top:294px;width:18px;height:1px;background:#c4c4c4"></div>
<div class="a" style="left:19px;top:294px;width:1319px;height:1px;background:#dadada"></div>
<div class="a" style="left:0;top:314px;width:18px;height:1px;background:#c4c4c4"></div>
<div class="a" style="left:19px;top:314px;width:1319px;height:1px;background:#dadada"></div>
<div class="a" style="left:0;top:334px;width:18px;height:1px;background:#c4c4c4"></div>
<div class="a" style="left:19px;top:334px;width:1319px;height:1px;background:#dadada"></div>
<div class="a" style="left:0;top:354px;width:18px;height:1px;background:#c4c4c4"></div>
<div class="a" style="left:19px;top:354px;width:1319px;height:1px;background:#dadada"></div>
<div class="a" style="left:0;top:374px;width:18px;height:1px;background:#c4c4c4"></div>
<div class="a" style="left:19px;top:374px;width:1319px;height:1px;background:#dadada"></div>
<div class="a" style="left:0;top:394px;width:18px;height:1px;background:#c4c4c4"></div>
<div class="a" style="left:19px;top:394px;width:1319px;height:1px;background:#dadada"></div>
<div class="a" style="left:0;top:414px;width:18px;height:1px;background:#c4c4c4"></div>
<div class="a" style="left:19px;top:414px;width:1319px;height:1px;background:#dadada"></div>
<div class="a" style="left:0;top:434px;width:18px;height:1px;background:#c4c4c4"></div>
<div class="a" style="left:19px;top:434px;width:1319px;height:1px;background:#dadada"></div>
<div class="a" style="left:0;top:454px;width:18px;height:1px;background:#c4c4c4"></div>
<div class="a" style="left:19px;top:454px;width:1319px;height:1px;background:#dadada"></div>
<div class="a" style="left:0;top:474px;width:18px;height:1px;background:#c4c4c4"></div>
<div class="a" style="left:19px;top:474px;width:1319px;height:1px;background:#dadada"></div>
<div class="a" style="left:0;top:494px;width:18px;height:1px;background:#c4c4c4"></div>
<div class="a" style="left:19px;top:494px;width:1319px;height:1px;background:#dadada"></div>
<div class="a" style="left:0;top:514px;width:18px;height:1px;background:#c4c4c4"></div>
<div class="a" style="left:19px;top:514px;width:1319px;height:1px;background:#dadada"></div>
<div class="a" style="left:0;top:534px;width:18px;height:1px;background:#c4c4c4"></div>
<div class="a" style="left:19px;top:534px;width:1319px;height:1px;background:#dadada"></div>
<div class="a" style="left:0;top:554px;width:18px;height:1px;background:#c4c4c4"></div>
<div class="a" style="left:19px;top:554px;width:1319px;height:1px;background:#dadada"></div>
<div class="a" style="left:0;top:574px;width:18px;height:1px;background:#c4c4c4"></div>
<div class="a" style="left:19px;top:574px;width:1319px;height:1px;background:#dadada"></div>
<div class="a" style="left:0;top:594px;width:18px;height:1px;background:#c4c4c4"></div>
<div class="a" style="left:19px;top:594px;width:1319px;height:1px;background:#dadada"></div>
<div class="a" style="left:0;top:614px;width:18px;height:1px;background:#c4c4c4"></div>
<div class="a" style="left:19px;top:614px;width:1319px;height:1px;background:#dadada"></div>
<div class="a" style="left:0;top:634px;width:18px;height:1px;background:#c4c4c4"></div>
<div class="a" style="left:19px;top:634px;width:1319px;height:1px;background:#dadada"></div>
<div class="a" style="left:0;top:654px;width:18px;height:1px;background:#c4c4c4"></div>
<div class="a" style="left:19px;top:654px;width:1319px;height:1px;background:#dadada"></div>
<div class="a" style="left:1337px;top:254px;width:1px;height:415px;background:#a6a6a6"></div>
<div class="ch" style="left:18px;width:64px;color:#217346">A</div>
<div class="ch" style="left:82px;width:64px;color:#222">B</div>
<div class="ch" style="left:146px;width:64px;color:#222">C</div>
<div class="ch" style="left:210px;width:64px;color:#222">D</div>
<div class="ch" style="left:274px;width:64px;color:#222">E</div>
<div class="ch" style="left:338px;width:64px;color:#222">F</div>
<div class="ch" style="left:402px;width:64px;color:#222">G</div>
<div class="ch" style="left:466px;width:64px;color:#222">H</div>
<div class="ch" style="left:530px;width:64px;color:#222">I</div>
<div class="ch" style="left:594px;width:64px;color:#222">J</div>
<div class="ch" style="left:658px;width:64px;color:#222">K</div>
<div class="ch" style="left:722px;width:64px;color:#222">L</div>
<div class="ch" style="left:786px;width:64px;color:#222">M</div>
<div class="ch" style="left:850px;width:64px;color:#222">N</div>
<div class="ch" style="left:914px;width:64px;color:#222">O</div>
<div class="ch" style="left:978px;width:64px;color:#222">P</div>
<div class="ch" style="left:1042px;width:64px;color:#222">Q</div>
<div class="ch" style="left:1106px;width:64px;color:#222">R</div>
<div class="ch" style="left:1170px;width:64px;color:#222">S</div>
<div class="ch" style="left:1234px;width:64px;color:#222">T</div>
<div class="ch" style="left:1321px;width:18px;color:#222">U</div>
<div class="rh" style="top:257px;height:17px;color:#217346">1</div>
<div class="rh" style="top:277px;height:17px;color:#222">2</div>
<div class="rh" style="top:297px;height:17px;color:#222">3</div>
<div class="rh" style="top:317px;height:17px;color:#222">4</div>
<div class="rh" style="top:337px;height:17px;color:#222">5</div>
<div class="rh" style="top:357px;height:17px;color:#222">6</div>
<div class="rh" style="top:377px;height:17px;color:#222">7</div>
<div class="rh" style="top:397px;height:17px;color:#222">8</div>
<div class="rh" style="top:417px;height:17px;color:#222">9</div>
<div class="rh" style="top:437px;height:17px;color:#222">10</div>
<div class="rh" style="top:457px;height:17px;color:#222">11</div>
<div class="rh" style="top:477px;height:17px;color:#222">12</div>
<div class="rh" style="top:497px;height:17px;color:#222">13</div>
<div class="rh" style="top:517px;height:17px;color:#222">14</div>
<div class="rh" style="top:537px;height:17px;color:#222">15</div>
<div class="rh" style="top:557px;height:17px;color:#222">16</div>
<div class="rh" style="top:577px;height:17px;color:#222">17</div>
<div class="rh" style="top:597px;height:17px;color:#222">18</div>
<div class="rh" style="top:617px;height:17px;color:#222">19</div>
<div class="rh" style="top:637px;height:17px;color:#222">20</div>
<div class="rh" style="top:657px;height:12px;color:#222">21</div>
<div class="a" style="left:17px;top:253px;width:67px;height:23px;border:2px solid #217346"></div>
<div class="a" style="left:79px;top:271px;width:7px;height:7px;background:#217346;border:1px solid #fff"></div>
<div class="a" style="left:1338px;top:235px;width:15px;height:434px;background:#e6e6e6"></div>
<div class="a" style="left:1342px;top:252px;width:11px;height:403px;background:#dadada"></div>
<div class="a" style="left:1341px;top:237px;width:13px;height:15px;background:#fff;border:1px solid #b0b0b0"></div>
<svg style="left:1344px;top:242px" width="9" height="5"><path d="M0 5H9L4.5 0Z" fill="#666"/></svg>
<div class="a" style="left:1341px;top:251px;width:13px;height:383px;background:#fff;border:1px solid #b0b0b0"></div>
<div class="a" style="left:1341px;top:655px;width:13px;height:14px;background:#fff;border:1px solid #b0b0b0"></div>
<svg style="left:1344px;top:660px" width="9" height="5"><path d="M0 0H9L4.5 5Z" fill="#666"/></svg>
<div class="a" style="left:0;top:669px;width:1353px;height:28px;background:#e6e6e6"></div>
<div class="a" style="left:0;top:669px;width:1338px;height:1px;background:#a8a8a8"></div>
<div class="a" style="left:0;top:697px;width:1353px;height:1px;background:#cfcfcf"></div>
<div class="a" style="left:0;top:698px;width:1353px;height:21px;background:#f0f0f0"></div>
<div class="a" style="left:93px;top:669px;width:65px;height:25px;background:#fff;border-left:1px solid #a8a8a8;border-right:1px solid #a8a8a8"></div>
<div class="a" style="left:93px;top:692px;width:65px;height:2px;background:#217346"></div>
<div class="t" style="left:105.4px;top:677px;font-size:12px;letter-spacing:0.091px;color:#217346;font-weight:bold;">Sheet1</div>
<svg style="left:0;top:660px" width="260" height="40"><path d="M24 18.5V25.5L20 22Z" fill="#c4c4c4"/><path d="M49 18.5V25.5L53 22Z" fill="#c4c4c4"/><circle cx="199.2" cy="22.6" r="7.6" fill="none" stroke="#7f7f7f" stroke-width="1.3"/><path d="M195 22.6H203.4M199.2 18.4V26.8" stroke="#6f6f6f" stroke-width="1.8"/></svg>
<div class="a" style="left:812px;top:679px;width:2px;height:2px;background:#a0a0a0"></div>
<div class="a" style="left:812px;top:683px;width:2px;height:2px;background:#a0a0a0"></div>
<div class="a" style="left:812px;top:687px;width:2px;height:2px;background:#a0a0a0"></div>
<div class="a" style="left:844px;top:677px;width:481px;height:14px;background:#dadada"></div>
<div class="a" style="left:829px;top:676px;width:15px;height:15px;background:#fff;border:1px solid #b0b0b0"></div>
<div class="a" style="left:843px;top:676px;width:456px;height:15px;background:#fff;border:1px solid #b0b0b0"></div>
<div class="a" style="left:1325px;top:676px;width:15px;height:15px;background:#fff;border:1px solid #b0b0b0"></div>
<svg style="left:0;top:660px" width="1353" height="40"><path d="M838.5 19V26L835 22.5Z" fill="#666"/><path d="M1331 19V26L1335 22.5Z" fill="#666"/></svg>
<div class="t" style="left:0.4px;top:702px;font-size:12px;letter-spacing:-0.800px;color:#444;">Ready</div>
<div class="a" style="left:1073px;top:698px;width:38px;height:21px;background:#c8c8c8"></div>
<svg style="left:0;top:690px" width="1353" height="29"><rect x="1085.5" y="11.5" width="12" height="11" fill="none" stroke="#6a6a6a"/><path d="M1089.5 12V22M1093.5 12V22M1086 15.5H1097M1086 19H1097" stroke="#6a6a6a"/><rect x="1123.5" y="11.5" width="13" height="12" fill="none" stroke="#6a6a6a"/><rect x="1126.5" y="13.5" width="7" height="8" fill="none" stroke="#6a6a6a"/><path d="M1128 16H1132M1128 18H1132M1128 20H1132" stroke="#6a6a6a" stroke-width="0.8"/><path d="M1161.5 11.5H1174.5V23.5H1161.5Z" fill="none" stroke="#6a6a6a"/><path d="M1164.5 12V17.5H1167.5V12M1169.5 12V15.5" fill="none" stroke="#6a6a6a"/><path d="M1191.5 17.5H1196.5" stroke="#555" stroke-width="1.6"/><path d="M1202 17.5H1301" stroke="#9a9a9a" stroke-width="1"/><rect x="1250" y="12" width="4" height="11" fill="#555"/><path d="M1306 17.5H1312.5M1309.25 14.2V20.8" stroke="#555" stroke-width="1.6"/></svg>
<div class="t" style="left:1323.8px;top:703px;font-size:12px;letter-spacing:-0.800px;color:#444;">100%</div>
<div class="a" style="left:610px;top:286px;width:307px;height:270px;background:#f0f0f0;border:1px solid #4a8c9c;box-shadow:0 2px 18px rgba(0,0,0,0.28)"></div>
<div class="a" style="left:611px;top:287px;width:305px;height:30px;background:#fff"></div>
<div class="t" style="left:619.6px;top:296px;font-size:12px;letter-spacing:-0.026px;color:#1e1e1e;">Import Data</div>
<svg style="left:600px;top:280px" width="320" height="280"><path d="M288.5 16.5L298.5 26.5M298.5 16.5L288.5 26.5" stroke="#111" stroke-width="1.1"/></svg>
<div class="t" style="left:846.0px;top:295px;font-size:13.5px;color:#1e1e1e;">?</div>
<div class="t" style="left:617.6px;top:325px;font-size:12px;letter-spacing:-0.080px;color:#1e1e1e;">Select how you want to view this data in your workbook.</div>
<svg style="left:0;top:0" width="1353" height="719"><circle cx="666.5" cy="347.5" r="6" fill="#fff" stroke="#333" stroke-width="1.2"/><circle cx="666.5" cy="347.5" r="3.8" fill="#333"/><circle cx="666.5" cy="366.5" r="6" fill="#fff" stroke="#333" stroke-width="1.2"/><circle cx="666.5" cy="385.5" r="6" fill="#fff" stroke="#333" stroke-width="1.2"/><circle cx="666.5" cy="404.5" r="6" fill="#fff" stroke="#333" stroke-width="1.2"/><circle cx="641.5" cy="439.5" r="6" fill="#fff" stroke="#333" stroke-width="1.2"/><circle cx="641.5" cy="481.5" r="6" fill="#fff" stroke="#333" stroke-width="1.2"/><circle cx="641.5" cy="481.5" r="3.8" fill="#333"/><rect x="636.5" y="342.5" width="12" height="11" fill="#fff" stroke="#8a8a8a"/><rect x="636" y="342" width="13" height="2" fill="#7a7a7a"/><path d="M640.5 344V354M644.5 344V354M637 347.5H649M637 350.5H649" stroke="#9a9a9a"/><rect x="636.5" y="359.5" width="14" height="15" fill="#fff" stroke="#7a7a7a"/><rect x="638" y="361" width="11" height="3" fill="#b8b8b8"/><rect x="638" y="361" width="3" height="12" fill="#b8b8b8"/><path d="M642 372L648 366M646 366H648.5V368.5M642 369.5V372.5H644.5" stroke="#3f74b8" stroke-width="1.2" fill="none"/><rect x="635" y="382" width="3" height="9" fill="#4a7ab7"/><rect x="641" y="378" width="3" height="4" fill="#e7bd6a"/><rect x="645" y="381" width="4" height="2" fill="#7a7a7a"/><rect x="640.5" y="384.5" width="10" height="10" fill="#fff" stroke="#7a7a7a"/><path d="M643 391A3 3 0 0 1 648 388M648 388.5V386.5M643 388V390.5" stroke="#3f74b8" stroke-width="1" fill="none"/><path d="M637.5 398.5H644L646.5 401V412.5H637.5Z" fill="#fff" stroke="#7a7a7a"/><path d="M639 401.5H643M639 403.5H643M639 405.5H642M639 407.5H642M639 409.5H642" stroke="#8a8a8a" stroke-width="1"/><rect x="644" y="403" width="7" height="10" fill="#e7c582"/><circle cx="647" cy="407" r="0.6" fill="#fff"/><rect x="617.5" y="499.5" width="12" height="12" fill="#fff" stroke="#333"/><rect x="653.5" y="451.5" width="170" height="19" fill="#f0f0f0" stroke="#a9a9a9"/><rect x="654" y="452" width="165" height="18" fill="#f0f0f0" stroke="#fff" stroke-width="1"/><rect x="823.5" y="451.5" width="21" height="19" fill="#fff" stroke="#b9b9b9" stroke-width="2"/><path d="M833.5 464V457.5M830 460.5L833.5 456.5L837 460.5" stroke="#000" stroke-width="1.6" fill="none"/><path d="M829 466H838" stroke="#000" stroke-width="1"/><path d="M617 493.5H910" stroke="#d8d8d8"/><rect x="618.5" y="526.5" width="96" height="20" fill="#e1e1e1" stroke="#bfbfbf"/><path d="M705 534H711L708 537Z" fill="#a6a6a6"/><rect x="752" y="526" width="72" height="20" fill="#e1e1e1" stroke="#0078d7" stroke-width="2"/><rect x="835.5" y="526.5" width="73" height="20" fill="#e1e1e1" stroke="#adadad"/></svg>
<div class="a" style="left:632px;top:498px;width:171px;height:17px;border:1px dotted #111"></div>
<div class="t" style="left:677.3px;top:342px;font-size:12px;letter-spacing:-0.498px;color:#1e1e1e;"><u>T</u>able</div>
<div class="t" style="left:677.3px;top:361px;font-size:12px;letter-spacing:-0.325px;color:#1e1e1e;"><u>P</u>ivotTable Report</div>
<div class="t" style="left:677.3px;top:380px;font-size:12px;letter-spacing:-0.382px;color:#1e1e1e;">Pivot<u>C</u>hart</div>
<div class="t" style="left:677.3px;top:399px;font-size:12px;letter-spacing:-0.244px;color:#1e1e1e;"><u>O</u>nly Create Connection</div>
<div class="t" style="left:617.6px;top:417px;font-size:12px;letter-spacing:-0.092px;color:#1e1e1e;">Where do you want to put the data?</div>
<div class="t" style="left:652.4px;top:434px;font-size:12px;letter-spacing:-0.225px;color:#1e1e1e;"><u>E</u>xisting worksheet:</div>
<div class="t" style="left:657.5px;top:455px;font-size:12px;letter-spacing:-0.607px;color:#8a8a8a;">=$A$1</div>
<div class="t" style="left:652.4px;top:476px;font-size:12px;letter-spacing:-0.226px;color:#1e1e1e;"><u>N</u>ew worksheet</div>
<div class="t" style="left:634.5px;top:501px;font-size:12px;letter-spacing:-0.068px;color:#1e1e1e;">Add this data to the Data <u>M</u>odel</div>
<div class="t" style="left:636.5px;top:531px;font-size:12px;letter-spacing:-0.361px;color:#838383;">P<u>r</u>operties...</div>
<div class="t" style="left:779.9px;top:531px;font-size:12px;letter-spacing:-0.800px;color:#1e1e1e;">OK</div>
<div class="t" style="left:855.5px;top:531px;font-size:12px;letter-spacing:-0.726px;color:#1e1e1e;">Cancel</div>
</body></html>
